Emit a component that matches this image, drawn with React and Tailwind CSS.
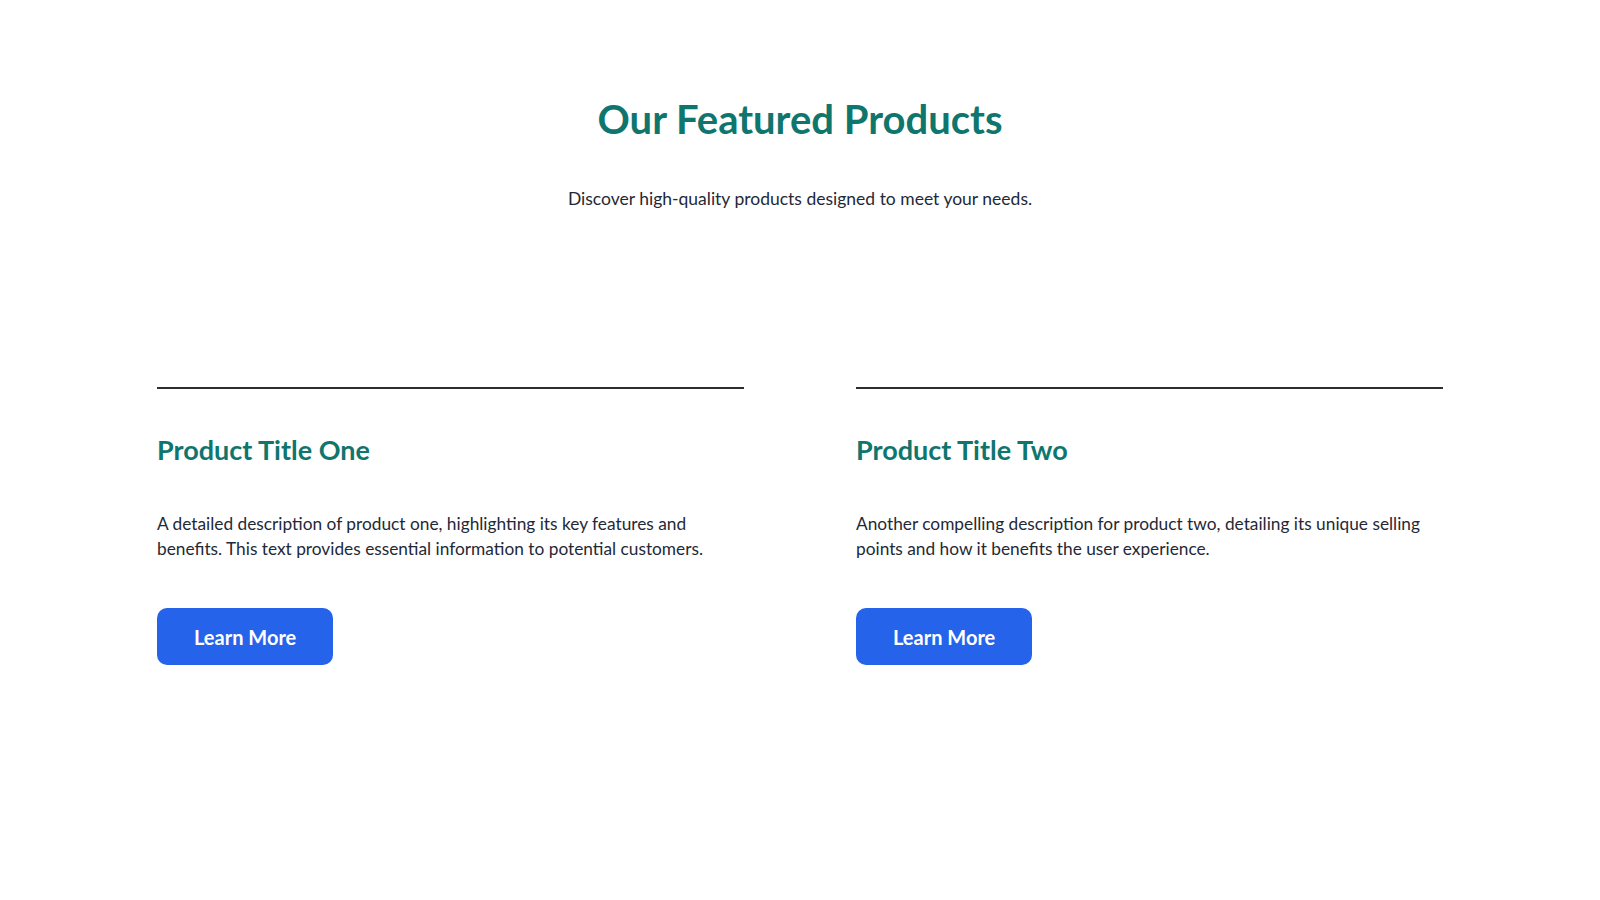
const products = [
  {
    title: 'Product Title One',
    text: 'A detailed description of product one, highlighting its key features and benefits. This text provides essential information to potential customers.'
  },
  {
    title: 'Product Title Two',
    text: 'Another compelling description for product two, detailing its unique selling points and how it benefits the user experience.'
  }
]

export default function App() {
  return (
    <main className="min-h-screen bg-white font-['Lato','Open_Sans',sans-serif] text-[#1f2937]">
      <section className="mx-auto w-[1286px] pt-[95px] pb-24">
        <div className="text-center">
          <h1 className="text-[40px] leading-[48px] font-bold text-[#0f766e]">Our Featured Products</h1>
          <p className="mt-[42px] text-[17.5px] leading-7">Discover high-quality products designed to meet your needs.</p>
        </div>

        <div className="mt-[174px] grid grid-cols-2 gap-28">
          {products.map((product) => (
            <article className="border-t-2 border-[#2d2d2d] pt-[43px]" key={product.title}>
              <h2 className="text-[27px] leading-9 font-bold text-[#0f766e]">{product.title}</h2>
              <p className="mt-[43px] max-w-[580px] text-[17.3px] leading-[25px]">{product.text}</p>
              <button className="mt-[47px] inline-flex h-[57px] items-center rounded-[10px] bg-[#2563eb] px-[37px] text-[20px] font-bold text-white">
                Learn More
              </button>
            </article>
          ))}
        </div>
      </section>
    </main>
  )
}
